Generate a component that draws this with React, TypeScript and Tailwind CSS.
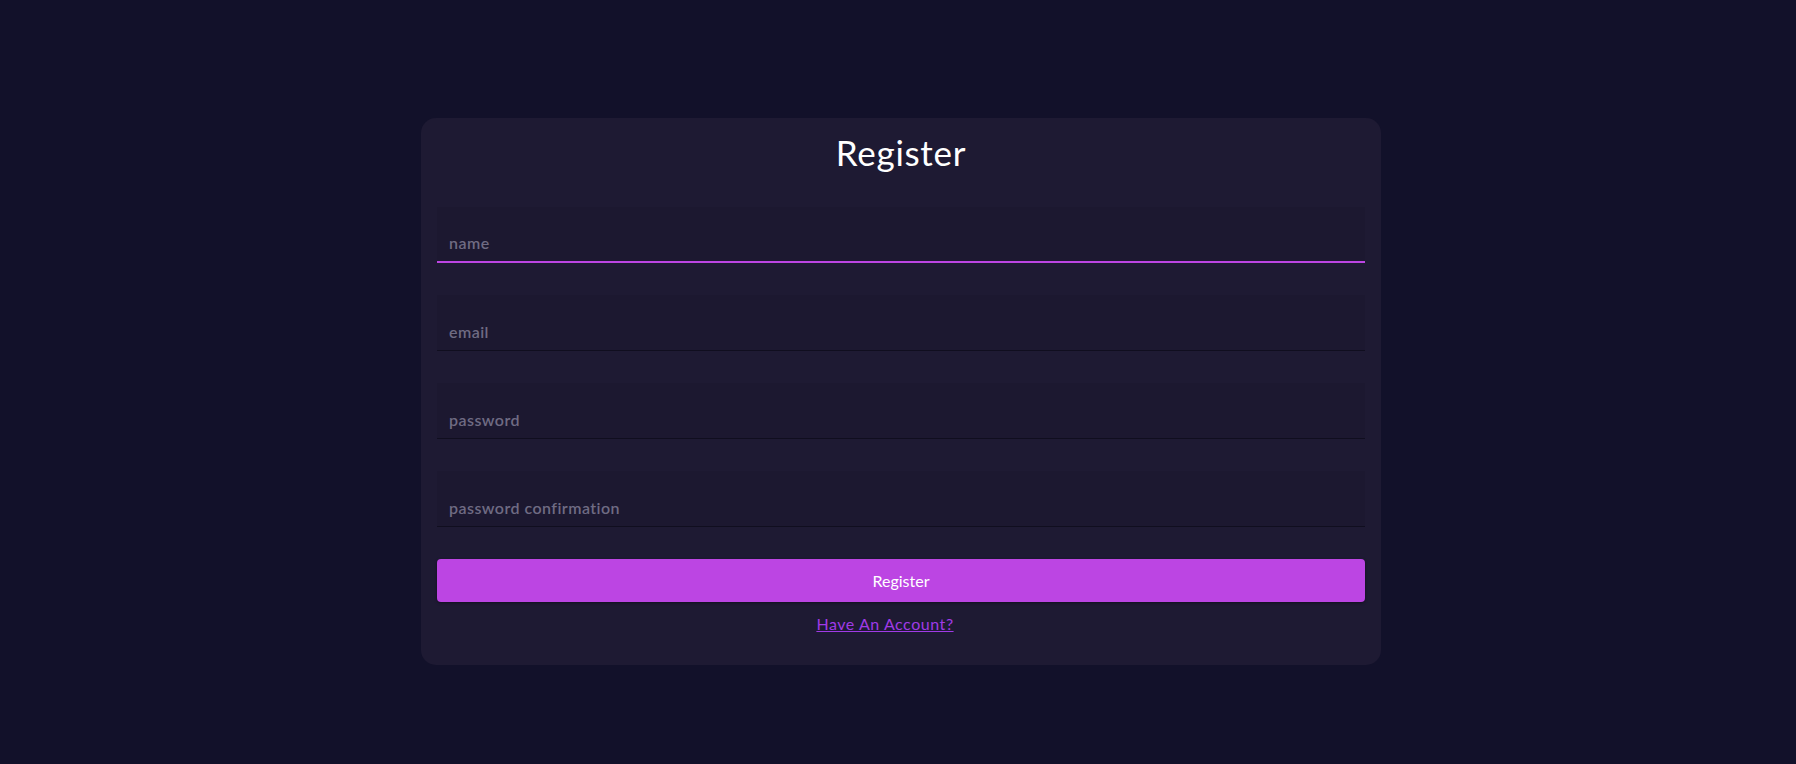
import React from "react";

const fields = [
  { name: "name", type: "text", placeholder: "name" },
  { name: "email", type: "email", placeholder: "email" },
  { name: "password", type: "password", placeholder: "password" },
  { name: "password_confirmation", type: "password", placeholder: "password confirmation" },
];

export default function App() {
  return (
    <div className="min-h-screen bg-[#12112a] pt-[118px] font-['Lato',sans-serif]">
      <div className="ml-[calc(50%-477px)] w-[960px] rounded-[15px] bg-[#1e1a33] px-4 pt-[14px] pb-[29px]">
        <h1 className="text-center text-[35px] leading-10 tracking-[0.7px] text-white">Register</h1>
        <form className="mt-[35px] flex flex-col gap-8" onSubmit={(e) => e.preventDefault()}>
          {fields.map((f, i) => (
            <input
              key={f.name}
              type={f.type}
              name={f.name}
              placeholder={f.placeholder}
              className={
                "h-14 w-full bg-[#1c1830] px-3 pt-[25px] pb-2 text-base font-semibold leading-[23px] tracking-[0.45px] text-white outline-none placeholder:text-[#6f6b83] " +
                (i === 0 ? "border-b-2 border-[#bc45e3]" : "border-b border-[#100e1f]")
              }
            />
          ))}
          <button
            type="submit"
            className="h-[43px] w-full rounded-[4px] bg-[#bc45e3] text-base text-white shadow-[0_1px_3px_rgba(0,0,0,0.4)]"
          >
            Register
          </button>
        </form>
        <div className="mt-[10px] pr-8 text-center leading-6">
          <a href="#" className="text-base tracking-[0.55px] text-[#a03ae6] underline">
            Have An Account?
          </a>
        </div>
      </div>
    </div>
  );
}
